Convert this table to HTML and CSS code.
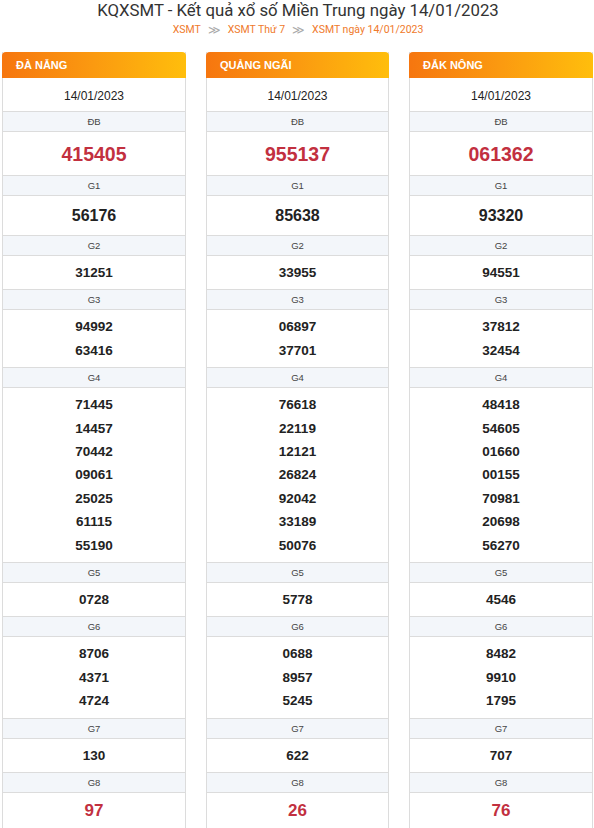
FILE: index.html
```html
<!DOCTYPE html>
<html lang="vi">
<head>
<meta charset="utf-8">
<title>KQXSMT</title>
<link rel="stylesheet" href="styles.css">
</head>
<body>
<div class="page">
  <h1 class="title">KQXSMT - Kết quả xổ số Miền Trung ngày 14/01/2023</h1>
  <nav class="crumbs">
    <a>XSMT</a><span class="sep">≫</span><a>XSMT Thứ 7</a><span class="sep">≫</span><a>XSMT ngày 14/01/2023</a>
  </nav>
  <div class="grid">
    <div class="col">
      <div class="head">ĐÀ NẴNG</div>
      <div class="date">14/01/2023</div>
      <div class="lbl">ĐB</div><div class="val db">415405</div>
      <div class="lbl">G1</div><div class="val g1">56176</div>
      <div class="lbl">G2</div><div class="val"><span>31251</span></div>
      <div class="lbl">G3</div><div class="val"><span>94992</span><span>63416</span></div>
      <div class="lbl">G4</div><div class="val"><span>71445</span><span>14457</span><span>70442</span><span>09061</span><span>25025</span><span>61115</span><span>55190</span></div>
      <div class="lbl">G5</div><div class="val"><span>0728</span></div>
      <div class="lbl">G6</div><div class="val"><span>8706</span><span>4371</span><span>4724</span></div>
      <div class="lbl">G7</div><div class="val"><span>130</span></div>
      <div class="lbl">G8</div><div class="val g8">97</div>
    </div>
    <div class="col">
      <div class="head">QUẢNG NGÃI</div>
      <div class="date">14/01/2023</div>
      <div class="lbl">ĐB</div><div class="val db">955137</div>
      <div class="lbl">G1</div><div class="val g1">85638</div>
      <div class="lbl">G2</div><div class="val"><span>33955</span></div>
      <div class="lbl">G3</div><div class="val"><span>06897</span><span>37701</span></div>
      <div class="lbl">G4</div><div class="val"><span>76618</span><span>22119</span><span>12121</span><span>26824</span><span>92042</span><span>33189</span><span>50076</span></div>
      <div class="lbl">G5</div><div class="val"><span>5778</span></div>
      <div class="lbl">G6</div><div class="val"><span>0688</span><span>8957</span><span>5245</span></div>
      <div class="lbl">G7</div><div class="val"><span>622</span></div>
      <div class="lbl">G8</div><div class="val g8">26</div>
    </div>
    <div class="col">
      <div class="head">ĐẮK NÔNG</div>
      <div class="date">14/01/2023</div>
      <div class="lbl">ĐB</div><div class="val db">061362</div>
      <div class="lbl">G1</div><div class="val g1">93320</div>
      <div class="lbl">G2</div><div class="val"><span>94551</span></div>
      <div class="lbl">G3</div><div class="val"><span>37812</span><span>32454</span></div>
      <div class="lbl">G4</div><div class="val"><span>48418</span><span>54605</span><span>01660</span><span>00155</span><span>70981</span><span>20698</span><span>56270</span></div>
      <div class="lbl">G5</div><div class="val"><span>4546</span></div>
      <div class="lbl">G6</div><div class="val"><span>8482</span><span>9910</span><span>1795</span></div>
      <div class="lbl">G7</div><div class="val"><span>707</span></div>
      <div class="lbl">G8</div><div class="val g8">76</div>
    </div>
  </div>
</div>
</body>
</html>
```

FILE: styles.css
```css
* { box-sizing: border-box; }
body {
  margin: 0;
  background: #fff;
  font-family: "Liberation Sans", Arial, sans-serif;
  color: #222;
}
.page {
  width: 594px;
  padding: 0 0 0 2px;
}
.title {
  margin: 0;
  text-align: center;
  font-family: Roboto, "Liberation Sans", sans-serif;
  font-weight: 400;
  font-size: 16.8px;
  line-height: 21px;
  color: #333;
}
.crumbs {
  display: flex;
  justify-content: center;
  align-items: center;
  gap: 4px;
  font-family: Roboto, "Liberation Sans", sans-serif;
  font-size: 10.5px;
  line-height: 16px;
  height: 17px;
  color: #ef7a2c;
}
.crumbs .sep { color: #aaa; font-size: 12px; padding: 0 3px; }
.grid {
  display: grid;
  grid-template-columns: 184px 183px 184px;
  column-gap: 20px;
  margin-top: 14px;
}
.col {
  display: flex;
  flex-direction: column;
  border-left: 1px solid #dcdcdc;
  border-right: 1px solid #dcdcdc;
  text-align: center;
}
.head {
  height: 26px;
  margin: 0 -1px;
  border-radius: 4px 4px 0 0;
  background: linear-gradient(90deg, #f6760f 0%, #fb9a10 50%, #ffbe0c 100%);
  color: #fff;
  font-weight: 700;
  font-size: 11px;
  line-height: 27px;
  text-align: left;
  padding-left: 14px;
  text-transform: uppercase;
}
.date {
  height: 34px;
  padding-top: 3px;
  line-height: 30px;
  font-size: 12px;
  color: #222;
  border-bottom: 1px solid #dcdcdc;
}
.lbl {
  height: 20px;
  line-height: 20px;
  font-size: 9.5px;
  color: #444;
  background: #f3f6fa;
  border-bottom: 1px solid #dcdcdc;
}
.val {
  display: flex;
  flex-direction: column;
  padding: 5px 0;
  font-weight: 700;
  font-size: 13.5px;
  line-height: 23.4px;
  color: #222;
  border-bottom: 1px solid #dcdcdc;
}
.val.db {
  height: 44px;
  padding: 0;
  line-height: 44px;
  font-size: 19.5px;
  color: #c2303f;
}
.val.g1 {
  height: 40px;
  padding: 0;
  line-height: 39px;
  font-size: 16px;
}
.val.g8 {
  height: 40px;
  padding: 0;
  line-height: 36px;
  font-size: 17px;
  color: #c2303f;
}
```
